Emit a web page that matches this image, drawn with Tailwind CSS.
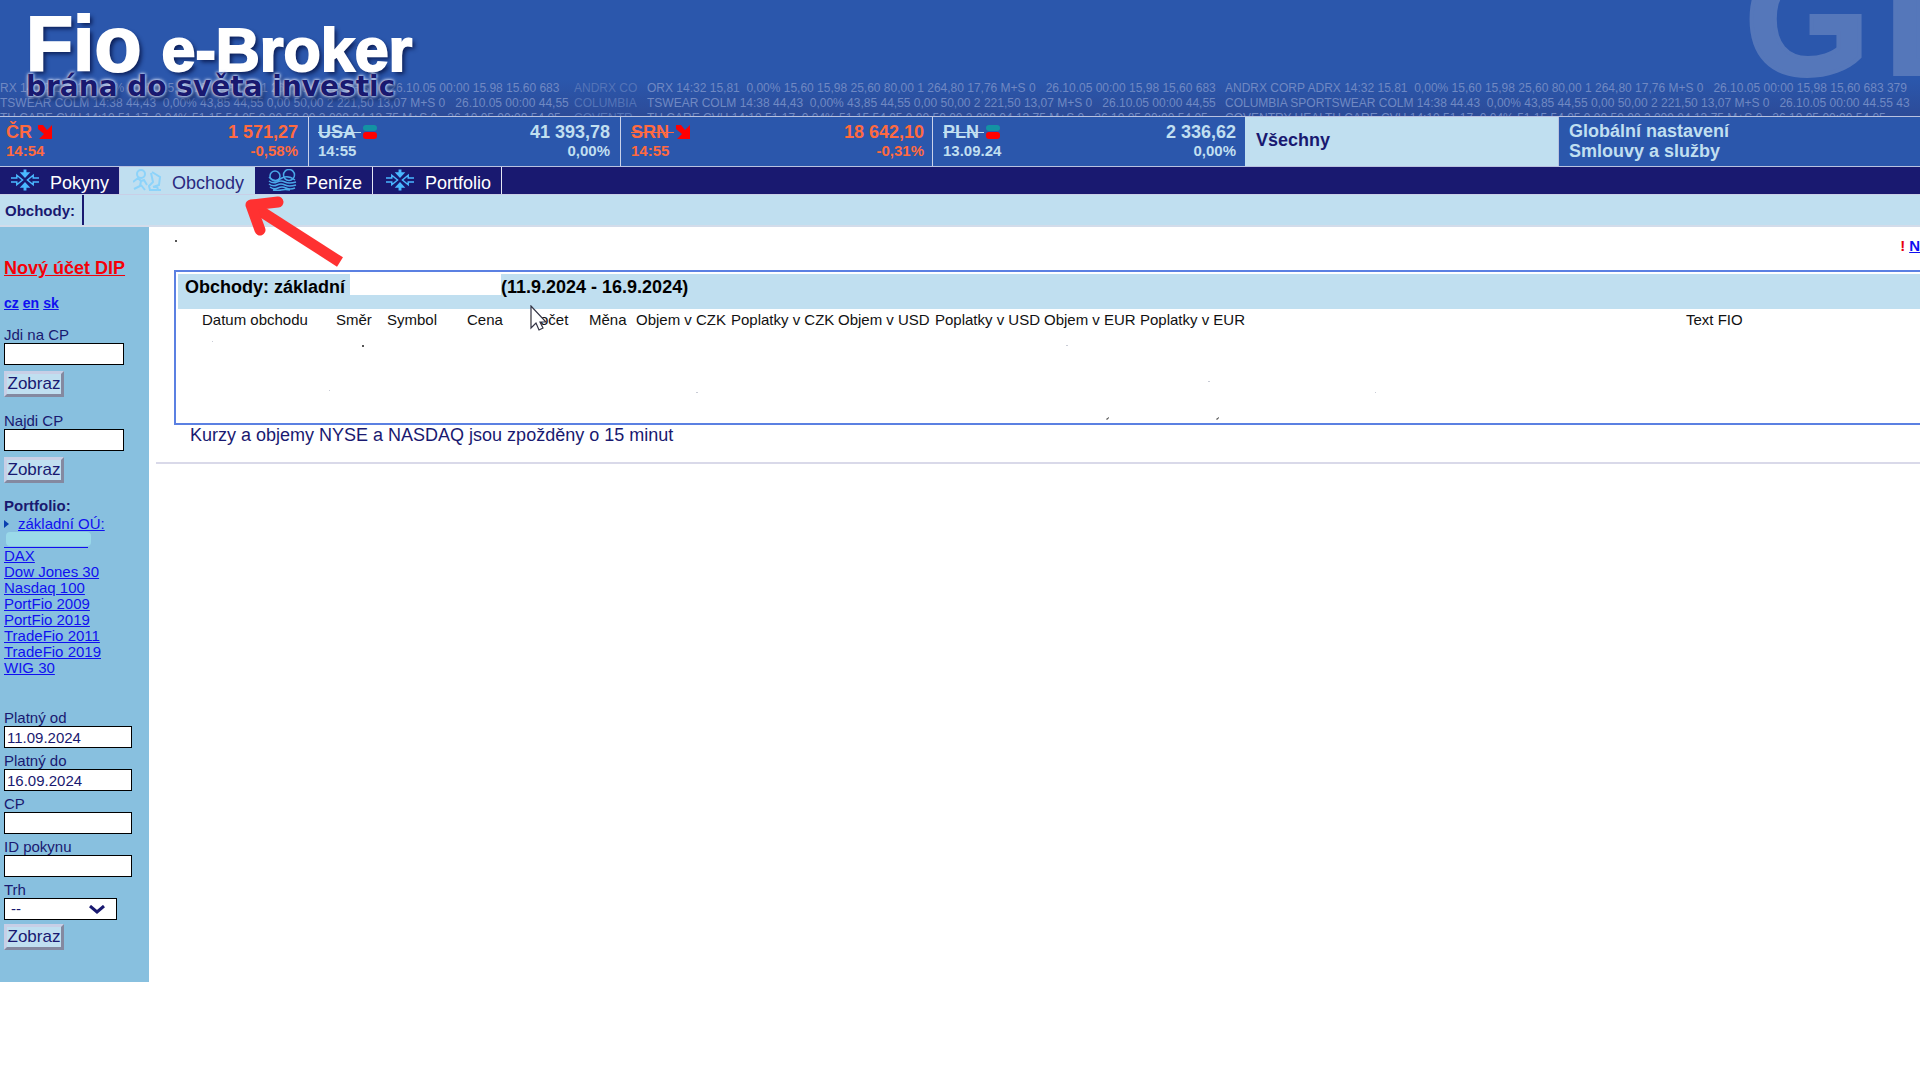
<!DOCTYPE html>
<html lang="cs">
<head>
<meta charset="utf-8">
<meta name="viewport" content="width=device-width, initial-scale=1">
<title>Fio e-Broker</title>
<script src="https://cdn.jsdelivr.net/npm/@tailwindcss/browser@4"></script>
</head>
<body class="relative min-h-screen overflow-x-hidden bg-white font-['Liberation_Sans',Arial,sans-serif] text-[#191970]">
<svg class="hidden" aria-hidden="true">
  <symbol id="converge" viewBox="0 0 29 22">
    <g fill="#4ab8ff"><path d="M13 0h3v3h4l-5.500 6L9 3h4zM13 22h3v-3h4l-5.500-6L9 19h4z"/></g>
    <g fill="none" stroke="#4ab8ff" stroke-width="1.500"><path d="M0 9h6V6l6 5-6 5v-3H0M29 9h-6V6l-6 5 6 5v-3h6"/></g>
  </symbol>
  <symbol id="down" viewBox="0 0 14 14"><path fill="#f00" d="M0 0h5l4 5 5-5v14H1l5-5-6-5z"/></symbol>
  <symbol id="flat" viewBox="0 0 14 14"><rect width="14" height="6" rx="3" fill="#1393a3"/><rect y="7" width="14" height="7" rx="3" fill="#f00"/></symbol>
</svg>

<header class="relative h-[116px] overflow-hidden bg-[#2b57ac]">
  <div aria-hidden="true" class="absolute -top-[61px] left-[1745px] flex gap-[15px] text-[160px] leading-[160px] font-bold text-[#5577ba] [-webkit-text-stroke:4px_#5577ba]"><span>G</span><span>L</span></div>
  <div aria-hidden="true" class="absolute inset-x-0 top-20 h-9 bg-linear-to-b from-transparent to-[#2c4b98]"></div>
  <div aria-hidden="true" class="absolute top-[81px] left-0 grid grid-cols-[574px_73px_578px_695px] text-xs leading-[15px] whitespace-nowrap text-[#7089c3]">
    <span>RX 14:32 15,81 &nbsp;0,00% 15,60 15,98 25,60 80,00 1 264,80 17,76 M+S 0 &nbsp; 26.10.05 00:00 15.98 15.60 683</span>
    <span class="text-[#5474b8]">ANDRX CO</span>
    <span>ORX 14:32 15,81 &nbsp;0,00% 15,60 15,98 25,60 80,00 1 264,80 17,76 M+S 0 &nbsp; 26.10.05 00:00 15,98 15,60 683</span>
    <span>ANDRX CORP ADRX 14:32 15.81 &nbsp;0,00% 15,60 15,98 25,60 80,00 1 264,80 17,76 M+S 0 &nbsp; 26.10.05 00:00 15,98 15,60 683 379</span>
    <span>TSWEAR COLM 14:38 44,43 &nbsp;0,00% 43,85 44,55 0,00 50,00 2 221,50 13,07 M+S 0 &nbsp; 26.10.05 00:00 44,55</span>
    <span class="text-[#5474b8]">COLUMBIA</span>
    <span>TSWEAR COLM 14:38 44,43 &nbsp;0,00% 43,85 44,55 0,00 50,00 2 221,50 13,07 M+S 0 &nbsp; 26.10.05 00:00 44,55</span>
    <span>COLUMBIA SPORTSWEAR COLM 14:38 44.43 &nbsp;0,00% 43,85 44,55 0,00 50,00 2 221,50 13,07 M+S 0 &nbsp; 26.10.05 00:00 44.55 43</span>
    <span>TH CARE CVH 14:10 51,17 &nbsp;0,04% 51,15 54,05 0,00 50,00 2 009,04 13,75 M+S 0 &nbsp; 26.10.05 00:00 54,05</span>
    <span class="text-[#5474b8]">COVENTR</span>
    <span>TH CARE CVH 14:10 51,17 &nbsp;0,04% 51,15 54,05 0,00 50,00 2 009,04 13,75 M+S 0 &nbsp; 26.10.05 00:00 54,05</span>
    <span>COVENTRY HEALTH CARE CVH 14:10 51.17 &nbsp;0,04% 51,15 54,05 0,00 50,00 2 009,04 13,75 M+S 0 &nbsp; 26.10.05 00:00 54.05</span>
  </div>
  <div class="relative pt-1 pl-6">
    <h1 class="flex h-[68px] items-baseline gap-5 pl-0.5 font-bold text-white [-webkit-text-stroke:2px_white] [text-shadow:3px_3px_4px_#0b1d55]"><span class="text-[77px] leading-[80px]">Fio</span><span class="text-[61px] leading-[68px]">e-Broker</span></h1>
    <p class="pl-0.5 font-['DejaVu_Sans',Verdana,sans-serif] text-[28px] leading-[30px] font-bold text-[#191970] [text-shadow:0_0_2px_#c5d2f0,0_0_3px_#c5d2f0,0_0_4px_#c5d2f0,3px_4px_4px_#142a66]">brána do světa investic</p>
  </div>
</header>

<section aria-label="Indexy" class="flex h-[51px] border-y border-[#b9c2e0] bg-[#2b57ac] text-[15px] leading-[18px] font-bold text-[#c0dff0]">
  <div class="flex w-[309px] justify-between border-r border-[#c9d2ea] pt-[5px] pr-[10px] pl-1.5 text-[#ff6a40]">
    <div><div class="flex items-center gap-1.5 text-lg leading-5">ČR<svg class="size-3.5"><use href="#down"/></svg></div>14:54</div>
    <div class="text-right"><div class="text-lg leading-5">1 571,27</div>-0,58%</div>
  </div>
  <div class="flex w-[312px] justify-between border-r border-[#c9d2ea] pt-[5px] pr-[10px] pl-[9px]">
    <div><div class="flex items-center gap-0.5 text-lg leading-5"><s>USA&nbsp;</s><svg class="size-3.5"><use href="#flat"/></svg></div>14:55</div>
    <div class="text-right"><div class="text-lg leading-5">41 393,78</div>0,00%</div>
  </div>
  <div class="flex w-[312px] justify-between border-r border-[#c9d2ea] pt-[5px] pr-2 pl-2.5 text-[#ff6a40]">
    <div><div class="flex items-center gap-0.5 text-lg leading-5"><s>SRN&nbsp;</s><svg class="size-3.5"><use href="#down"/></svg></div>14:55</div>
    <div class="text-right"><div class="text-lg leading-5">18 642,10</div>-0,31%</div>
  </div>
  <div class="flex w-[312px] justify-between pt-[5px] pr-[9px] pl-2.5">
    <div><div class="flex items-center gap-0.5 text-lg leading-5"><s>PLN&nbsp;</s><svg class="size-3.5"><use href="#flat"/></svg></div>13.09.24</div>
    <div class="text-right"><div class="text-lg leading-5">2 336,62</div>0,00%</div>
  </div>
  <a href="#" class="w-[313px] bg-[#c0dff0] pt-[13px] pl-[11px] text-lg leading-5 text-[#191970]">Všechny</a>
  <div class="flex flex-1 flex-col border-l border-[#b9c2e0] pt-1 pl-[10px] text-lg leading-5"><a href="#">Globální nastavení</a><a href="#">Smlouvy a služby</a></div>
</section>

<nav class="flex h-7 border-b border-[#c9cfe6] bg-[#191970] text-lg leading-7 text-white">
  <a href="#" class="flex w-[120px] gap-[11px] border-r border-[#c9cfe6] pt-0.5 pl-[11px]"><svg class="h-[22px] w-7"><use href="#converge"/></svg>Pokyny</a>
  <a href="#" class="flex w-[135px] gap-2.5 bg-[#c0dff0] pt-0.5 pl-[13px] text-[#2a2a80]">
    <svg class="h-[22px] w-[29px]" viewBox="0 0 29 22" fill="none" stroke="#8cd3fa" stroke-width="2"><circle cx="8" cy="5" r="4"/><path d="M0 13l5-4 3 3 3-1 3 5M8 12l-1 5-6 3M8 16l4 5M18 4l2 9-4 4 1 4h7M19 3l8 5-1 8-6 2M24 17l1 4h3"/></svg>Obchody</a>
  <a href="#" class="flex w-[118px] gap-[9px] border-r border-[#e5e8f4] pt-0.5 pl-[13px]">
    <svg class="h-[22px] w-[29px]" viewBox="0 0 29 22" fill="none" stroke="#4aa8e8" stroke-width="1.500"><circle cx="7" cy="7" r="5"/><circle cx="21" cy="6" r="5.500"/><path d="M1 8c5 5 8 4 13 1s9-1 13 2M1 12q4 3 8 1t8 0 11 0M1 15q4 3 8 1t8 0 11 0M2 18q4 3 8 1t8 0 9 0M5 21q4 1 8 0t9 0"/></svg>Peníze</a>
  <a href="#" class="flex w-[129px] gap-[11px] border-r border-[#e5e8f4] pt-0.5 pl-[13px]"><svg class="h-[22px] w-7"><use href="#converge"/></svg>Portfolio</a>
</nav>
<div class="flex h-8 border-b-2 border-[#d3dcea] bg-[#c0dff0] text-[15px] leading-[31px] font-bold"><span class="w-[84px] border-r-2 border-[#191970] pl-[5px]">Obchody:</span></div>

<div class="flex items-start">
  <aside class="w-[149px] shrink-0 bg-[#88c0df] pt-[31px] pb-8 pl-1 text-[15px] leading-[17px]">
    <a href="#" class="block text-lg leading-5 font-bold text-[#f50008] underline">Nový účet DIP</a>
    <div class="mt-[17px] flex gap-1 text-sm leading-[17px] font-bold text-[#1010f0]"><a href="#" class="underline">cz</a><a href="#" class="underline">en</a><a href="#" class="underline">sk</a></div>
    <form class="mt-3.5">
      <label for="jdi" class="block">Jdi na CP</label>
      <input id="jdi" class="block h-[22px] w-[120px] border border-black bg-white px-0.5">
      <button type="button" class="mt-1.5 block h-[26px] w-[60px] border-[3px] border-t-[#c8cfe6] border-r-[#8489a0] border-b-[#8489a0] border-l-[#c8cfe6] bg-[#c0dff0] text-[17px] leading-5">Zobraz</button>
    </form>
    <form class="mt-[15px]">
      <label for="najdi" class="block">Najdi CP</label>
      <input id="najdi" class="block h-[22px] w-[120px] border border-black bg-white px-0.5">
      <button type="button" class="mt-1.5 block h-[26px] w-[60px] border-[3px] border-t-[#c8cfe6] border-r-[#8489a0] border-b-[#8489a0] border-l-[#c8cfe6] bg-[#c0dff0] text-[17px] leading-5">Zobraz</button>
    </form>
    <h2 class="mt-3.5 font-bold">Portfolio:</h2>
    <ul class="mt-0.5 leading-4 text-[#1010f0]">
      <li class="flex items-center gap-[9px]"><svg class="h-2 w-[5px]" viewBox="0 0 5 8"><path fill="#0a3fb0" d="M0 0l5 4-5 4z"/></svg><a href="#" class="underline">základní OÚ:</a></li>
      <li class="h-4 w-[84px] border-b border-[#1010f0]"><div class="ml-0.5 h-3.5 w-[85px] rounded bg-[#9ad9e9]"></div></li>
      <li><a href="#" class="underline">DAX</a></li>
      <li><a href="#" class="underline">Dow Jones 30</a></li>
      <li><a href="#" class="underline">Nasdaq 100</a></li>
      <li><a href="#" class="underline">PortFio 2009</a></li>
      <li><a href="#" class="underline">PortFio 2019</a></li>
      <li><a href="#" class="underline">TradeFio 2011</a></li>
      <li><a href="#" class="underline">TradeFio 2019</a></li>
      <li><a href="#" class="underline">WIG 30</a></li>
    </ul>
    <form class="mt-[33px]">
      <label for="od" class="block">Platný od</label>
      <input id="od" value="11.09.2024" class="mb-1 block h-[22px] w-32 border border-black bg-white px-0.5">
      <label for="do" class="block">Platný do</label>
      <input id="do" value="16.09.2024" class="mb-1 block h-[22px] w-32 border border-black bg-white px-0.5">
      <label for="cp" class="block">CP</label>
      <input id="cp" class="mb-1 block h-[22px] w-32 border border-black bg-white px-0.5">
      <label for="idp" class="block">ID pokynu</label>
      <input id="idp" class="mb-1 block h-[22px] w-32 border border-black bg-white px-0.5">
      <label for="trh" class="block">Trh</label>
      <div class="relative w-[113px]">
        <select id="trh" class="block h-[22px] w-full appearance-none border border-black bg-white pl-1.5 leading-4"><option>--</option></select>
        <svg class="pointer-events-none absolute top-[7px] right-3 h-2.5 w-4" viewBox="0 0 16 10" fill="none" stroke="#191970" stroke-width="3"><path d="M1 1l7 6 7-6"/></svg>
      </div>
      <button type="button" class="mt-1 block h-[26px] w-[60px] border-[3px] border-t-[#c8cfe6] border-r-[#8489a0] border-b-[#8489a0] border-l-[#c8cfe6] bg-[#c0dff0] text-[17px] leading-5">Zobraz</button>
    </form>
  </aside>

  <main class="min-w-0 flex-1 pl-[7px]">
    <div class="flex h-[43px] justify-end gap-1 pt-2.5 text-[15px] leading-[17px] font-bold"><span class="text-red-600">!</span><a href="#" class="text-[#1010f0] underline">N</a></div>
    <section class="relative ml-[18px] h-[155px] border-2 border-r-0 border-[#5b80e2] pt-0.5 pl-0.5">
      <h2 class="flex h-[35px] items-start bg-[#c0dff0] pl-[7px] text-lg font-bold text-black"><span class="w-[165px] leading-[26px]">Obchody: základní</span><span class="h-[21px] w-[151px] bg-white"></span><span class="leading-[26px]">(11.9.2024 - 16.9.2024)</span></h2>
      <table class="w-full table-fixed text-left text-[15px] leading-[22px] whitespace-nowrap text-[#111]">
        <colgroup><col class="w-[158px]"><col class="w-[51px]"><col class="w-20"><col class="w-[63px]"><col class="w-[59px]"><col class="w-[47px]"><col class="w-[95px]"><col class="w-[107px]"><col class="w-[97px]"><col class="w-[109px]"><col class="w-24"><col class="w-[546px]"><col></colgroup>
        <thead><tr>
          <th class="pl-6 font-normal">Datum obchodu</th><th class="font-normal">Směr</th><th class="font-normal">Symbol</th><th class="font-normal">Cena</th><th class="font-normal">Počet</th><th class="font-normal">Měna</th><th class="font-normal">Objem v CZK</th><th class="font-normal">Poplatky v CZK</th><th class="font-normal">Objem v USD</th><th class="font-normal">Poplatky v USD</th><th class="font-normal">Objem v EUR</th><th class="font-normal">Poplatky v EUR</th><th class="font-normal">Text FIO</th>
        </tr></thead>
      </table>
      <svg class="pointer-events-none absolute top-0 left-0 h-full w-full" aria-hidden="true">
        <g fill="#555"><path d="M186 73h2v2h-2zM930 147l3-2v1l-2 2zM1040 147l3-2v1l-2 2z"/></g>
        <g fill="#c9ccd6"><path d="M36 69h1v1h-1zM153 118h1v1h-1zM520 120h2v1h-2zM890 73h2v1h-2zM1032 109h2v1h-2zM1199 120h1v1h-1z"/></g>
      </svg>
      <svg class="pointer-events-none absolute top-[33px] left-[354px] h-[26px] w-[17px]" viewBox="0 0 17 26" aria-hidden="true"><path d="M1 1v22l5-5 3 7 4-2-3-6h6z" fill="#fff" stroke="#333344" stroke-width="1.200"/></svg>
    </section>
    <p class="pl-[34px] text-lg leading-5">Kurzy a objemy NYSE a NASDAQ jsou zpožděny o 15 minut</p>
    <hr class="mt-[17px] border-t-2 border-[#d9d9e9]">
  </main>
</div>

<svg class="pointer-events-none absolute top-[190px] left-[240px] h-20 w-[110px]" viewBox="0 0 110 80" fill="none" stroke="#ff3131" aria-hidden="true"><path d="M100 72L14 17" stroke-width="11"/><path d="M38 12L11 15l9 25" stroke-width="11" stroke-linecap="round" stroke-linejoin="round"/></svg>
<svg class="pointer-events-none absolute top-[240px] left-[175px] size-0.5" aria-hidden="true"><path fill="#555" d="M0 0h2v2H0z"/></svg>
</body>
</html>
